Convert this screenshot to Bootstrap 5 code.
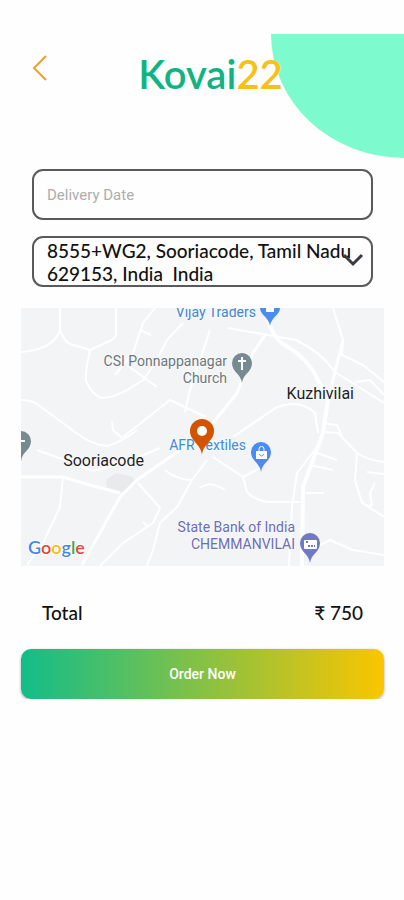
<!DOCTYPE html>
<html lang="en">
<head>
<meta charset="utf-8">
<meta name="viewport" content="width=device-width, initial-scale=1">
<title>Kovai22</title>
<link href="https://cdn.jsdelivr.net/npm/bootstrap@5.3.0/dist/css/bootstrap.min.css" rel="stylesheet">
<style>
  body { font-family: Lato, "Liberation Sans", sans-serif; color: #111; background: #fefefe; }
  .top-area { margin-top: 34px; height: 124px; }
  .corner-shape { width: 133px; height: 124px; background: #7efbce; border-bottom-left-radius: 100%; }
  .back-link { left: 32px; top: 20px; line-height: 1; }
  .brand { font-size: 40px; font-weight: 600; line-height: 80px; color: #12b383; padding-left: 17px; }
  .brand span { color: #f7c116; }
  .order-form { padding: 11px 20px 0 21px; }
  .fields { padding: 0 11px; gap: 16px; }
  .field-box, .field-box:focus { height: 51px; border: 2px solid #5a5a5c; border-radius: 11px; background-color: #fefefe; box-shadow: none; }
  .date-box { font: 15px Roboto, sans-serif; padding: 0 13px; }
  .date-box::placeholder { color: #adadad; opacity: 1; }
  .address-box { display: block; width: 100%; appearance: none; padding: 0 13px; font-size: 19px; font-weight: 500; line-height: 23px; color: #111; white-space: pre-wrap; }
  .chevron { right: 9px; top: 17px; }
  .map-view { margin-top: 21px; }
  .map-view svg { display: block; width: 100%; height: auto; }
  .map-view text { font-family: Roboto, sans-serif; font-size: 14px; }
  .map-view .place { font-size: 16px; fill: #1f1f1f; }
  .map-view .logo-word { font-family: Lato, sans-serif; font-size: 18px; font-weight: 600; }
  .total-row { padding: 33px 21px 0; font-size: 19px; font-weight: 500; line-height: 28px; }
  .btn-order, .btn-order:hover { margin-top: 22px; height: 50px; border: 0; border-radius: 10px; color: #fff; font: 500 14px Roboto, sans-serif; background: linear-gradient(90deg, #12bd8a, #fbc500); box-shadow: 0 1px 3px rgba(0,0,0,.35); }
</style>
<script src="https://cdn.jsdelivr.net/npm/bootstrap@5.3.0/dist/js/bootstrap.bundle.min.js" defer></script>
</head>
<body>
<header class="top-area position-relative">
  <div class="corner-shape position-absolute top-0 end-0"></div>
  <a href="#" class="back-link position-absolute" aria-label="Back">
    <svg width="16" height="28" viewBox="0 0 16 28" fill="none" stroke="#f0a02c" stroke-width="2"><path d="M14 2 2 14l12 12"/></svg>
  </a>
  <h1 class="brand position-relative text-center m-0 pe-none">Kovai<span>22</span></h1>
</header>
<main>
  <form class="order-form">
    <div class="fields d-flex flex-column">
      <input type="text" class="form-control field-box date-box" placeholder="Delivery Date" aria-label="Delivery Date">
      <div class="position-relative">
        <select class="field-box address-box" aria-label="Address">
          <option>8555+WG2, Sooriacode, Tamil Nadu 629153, India&nbsp; India</option>
        </select>
        <svg class="chevron position-absolute pe-none" width="22" height="15" viewBox="0 0 22 15" fill="none" stroke="#3c3c40" stroke-width="3"><path d="m2 2 9 9 9-9"/></svg>
      </div>
    </div>
    <div class="map-view">
      <svg viewBox="21 308 363 258" role="img" aria-label="Map of Sooriacode">
        <rect x="21" y="308" width="363" height="258" fill="#f2f4f5"/>
        <path d="m106 480 10-7 17 4 3 7-14 8-15-4z" fill="#e8eaeb"/>
        <g fill="none" stroke="#fff" stroke-width="2" stroke-linejoin="round">
          <path d="M60 308v22q-7 20-39 22M60 330q4 11 10 14l20 6 20-9q6-3 6-8v-25M90 350q-5 22-4 31 6 14 16 17 11 0 25-8l16-10q10-12 24-40l16-17M155 308l-12 15-10 30-18 22M127 365l30 22M140 330l11 5"/>
          <path d="M21 400q10 0 16 4l38 28q17 13 32 14 15-4 30-16M123 437l47-37 36 17M210 330l-20 60-5 22M112 421l1 9 9 8M228 328q45 8 68 12 25 12 39 32l49 31M333 308l10 32-1 15 21 10 21 17M233 437l44-30q23-8 38 6l3 20M323 423l14 2 5 12M355 382l15-2 14 15"/>
          <path d="M63 477l-3 30-17 36-16 22M138 483l22 25-7 15-30 20-23 23M192 480l-15 27-17 16-7 27-6 16M165 470q12 10 27 10l15-20M37 450l25 9 30 12 28-6 40-17M200 488q10-8 25 2M213 457l30 20 19-10M243 477l4 15q8 8 20 10h33M317 447l-20 26-5 34-3 59M317 453l20 7M310 465l23 5M306 493h18"/>
          <path d="M323 432l15 1 19 20q10 7 27 9M357 453l-2 27 6 20q5 8 11 5l-2-12 5-10M361 502l23 15M317 547l13-7 23 10 31 5M367 472l17 2M143 522l5 5"/>
        </g>
        <g fill="none" stroke="#fff" stroke-width="4" stroke-linejoin="round">
          <path d="M268 320q5 17 15 24 25 14 35 36l10 20-5 33-20 54-1 79"/>
          <path d="M343 340l-9 36-6 24M265 335l-12 18-16 40-24 30-36 29-40 28-17 17-38 68M21 477h42l27 8 30 8" stroke-width="3"/>
        </g>
        <g>
          <path d="M242 383c-1-9-10-11-10-20a10 10 0 0 1 20 0c0 9-9 11-10 20z" fill="#768a92"/>
          <path d="M242 357v13M238 361h8" stroke="#fff" stroke-width="2"/>
          <path d="M21 461c1-9 10-11 10-20a10 10 0 0 0-10-10z" fill="#768a92"/><path d="M21 441h4" stroke="#fff" stroke-width="2"/>
          <path d="M270 326c-1-9-10-11-10-18h20c0 7-9 9-10 18z" fill="#4a8cf0"/><path d="M266 308h8v4h-8z" fill="#fff"/>
          <path d="M261 472c-1-9-10-11-10-20a10 10 0 0 1 20 0c0 9-9 11-10 20z" fill="#4a8cf0"/>
          <path d="M256 451h11v8h-11z" fill="#fff"/><path d="M259 451v-2a2.500 2.500 0 0 1 5 0v2" fill="none" stroke="#fff"/><path d="M259 454q2.500 4 5 0" fill="none" stroke="#4a8cf0"/>
          <path d="M310 563c-1-9-10-11-10-20a10 10 0 0 1 20 0c0 9-9 11-10 20z" fill="#7079c4"/>
          <rect x="304" y="540" width="13" height="9" rx="1" fill="#fff"/><path d="M306 542h3M308 546h7" stroke="#7079c4" stroke-width="2" stroke-dasharray="2 1"/>
        </g>
        <g text-anchor="end" stroke="#f8f9fa" stroke-width="2" paint-order="stroke">
          <text x="256" y="317" fill="#4285d0">Vijay Traders</text>
          <text x="227" y="366" fill="#6d777c">CSI Ponnappanagar</text>
          <text x="227" y="383" fill="#6d777c">Church</text>
          <text x="246" y="450" fill="#3f8bd8">AFR Textiles</text>
          <text x="295" y="532" fill="#6c6cb8">State Bank of India</text>
          <text x="295" y="549" fill="#6c6cb8">CHEMMANVILAI</text>
          <text class="place" x="354" y="399">Kuzhivilai</text>
          <text class="place" x="144" y="466">Sooriacode</text>
        </g>
        <text class="logo-word" x="28" y="554" stroke="#fff" stroke-width="2" paint-order="stroke"><tspan fill="#4285f4">G</tspan><tspan fill="#ea4335">o</tspan><tspan fill="#fbbc05">o</tspan><tspan fill="#4285f4">g</tspan><tspan fill="#34a853">l</tspan><tspan fill="#ea4335">e</tspan></text>
        <path d="M202 455c-1-11-12-14-12-24a12 12 0 0 1 24 0c0 10-11 13-12 24z" fill="#d35400"/>
        <circle cx="202" cy="431" r="5" fill="#fff"/>
      </svg>
    </div>
    <div class="total-row d-flex justify-content-between"><span>Total</span><span>₹ 750</span></div>
    <button type="submit" class="btn btn-order w-100">Order Now</button>
  </form>
</main>
</body>
</html>
